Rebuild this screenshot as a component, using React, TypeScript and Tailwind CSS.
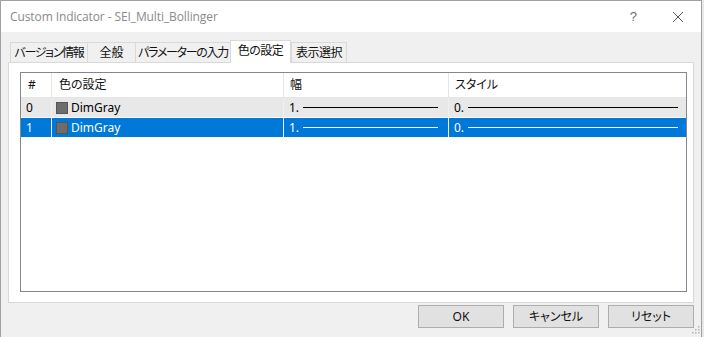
import React from "react";

const tabs = [
  { label: "バージョン情報", w: 78, tr: "tracking-[-1.3px]" },
  { label: "全般", w: 49, tr: "tracking-[0px]" },
  { label: "パラメーターの入力", w: 96, tr: "tracking-[-1.3px]" },
  { label: "色の設定", w: 61, tr: "tracking-[-0.5px]", active: true },
  { label: "表示選択", w: 56, tr: "tracking-[-0.5px]" },
];

function Row({ idx, selected }: { idx: string; selected?: boolean }) {
  const txt = selected ? "text-white" : "text-black";
  const line = selected ? "bg-white" : "bg-black";
  return (
    <div
      className={`flex h-[19px] ${selected ? "bg-[#0078d7]" : "bg-[#e8e8e8]"} ${txt}`}
    >
      <div className="w-[31px] shrink-0 border-r border-[#f0f0f0] pl-[5px] flex items-center">
        {idx}
      </div>
      <div className="w-[232px] shrink-0 border-r border-[#f0f0f0] pl-[4px] flex items-center">
        <span className="w-[12px] h-[12px] bg-[#6d6d6d] border border-[#555555] shrink-0" />
        <span className="ml-[3px]">DimGray</span>
      </div>
      <div className="w-[165px] shrink-0 border-r border-[#f0f0f0] pl-[5px] pr-[10px] flex items-center">
        <span>1.</span>
        <span className={`ml-[4px] flex-1 h-[1px] ${line}`} />
      </div>
      <div className="flex-1 pl-[5px] pr-[8px] flex items-center">
        <span>0.</span>
        <span className={`ml-[4px] flex-1 h-[1px] ${line}`} />
      </div>
    </div>
  );
}

export default function App() {
  return (
    <div className="w-[704px] h-[337px] overflow-hidden bg-[#e8e8e8] font-['Noto_Sans','Noto_Sans_CJK_JP',sans-serif] [font-feature-settings:'palt'] text-[12px] leading-none text-[#111111]">
      <div className="relative w-[702px] h-[337px] flex flex-col border-l border-t border-r border-[#a0a0a0] bg-[#f0f0f0]">
        {/* title bar */}
        <div className="h-[31px] bg-white flex items-center pl-[9px] shrink-0">
          <span className="text-[#8a8a8a] text-[12px] font-['Open_Sans','Noto_Sans',sans-serif] tracking-[-0.1px]">
            Custom Indicator - SEI_Multi_Bollinger
          </span>
          <span className="ml-auto mr-[35px] text-[#6a6a6a] text-[13px] font-['Liberation_Sans',sans-serif]">
            ?
          </span>
          <svg width="12" height="12" viewBox="0 0 12 12" className="mr-[17px]">
            <path d="M1 1 L11 11 M11 1 L1 11" stroke="#555555" strokeWidth="1" />
          </svg>
        </div>

        {/* body */}
        <div className="flex-1 flex flex-col">
          {/* tabs */}
          <div className="flex items-end h-[30px] pl-[9px]">
            {tabs.map((t) =>
              t.active ? (
                <div
                  key={t.label}
                  style={{ width: t.w }}
                  className={`relative z-10 h-[23px] mb-[-1px] bg-white border-t border-l border-r border-[#d9d9d9] flex items-center justify-center pb-[3px] whitespace-nowrap ${t.tr}`}
                >
                  {t.label}
                </div>
              ) : (
                <div
                  key={t.label}
                  style={{ width: t.w }}
                  className={`h-[20px] bg-[#f0f0f0] border-t border-l border-r border-[#d9d9d9] -mr-[1px] flex items-center justify-center whitespace-nowrap ${t.tr}`}
                >
                  {t.label}
                </div>
              )
            )}
          </div>

          {/* panel */}
          <div className="ml-[7px] w-[686px] h-[241px] bg-white border border-[#d9d9d9] pl-[11px] pt-[9px]">
            <div className="w-[667px] h-[220px] border border-[#828790] bg-white flex flex-col">
              <div className="flex h-[25px] border-b border-[#e5e5e5] shrink-0">
                <div className="w-[31px] border-r border-[#e5e5e5] pl-[7px] flex items-center">#</div>
                <div className="w-[232px] border-r border-[#e5e5e5] pl-[7px] flex items-center">色の設定</div>
                <div className="w-[165px] border-r border-[#e5e5e5] pl-[6px] flex items-center">幅</div>
                <div className="flex-1 pl-[6px] flex items-center">スタイル</div>
              </div>
              <Row idx="0" />
              <div className="h-[1px] bg-white" />
              <Row idx="1" selected />
            </div>
          </div>

          {/* buttons */}
          <div className="ml-[7px] w-[686px] mt-[2px] flex justify-end gap-[9px]">
            {["OK", "キャンセル", "リセット"].map((b) => (
              <div
                key={b}
                className="w-[86px] h-[23px] bg-[#e1e1e1] border border-[#adadad] flex items-center justify-center"
              >
                {b}
              </div>
            ))}
          </div>
        </div>

        {/* size grip */}
        <svg width="10" height="10" viewBox="0 0 10 10" className="absolute right-[1px] bottom-[3px]">
          {[
            [8, 2],
            [5, 5],
            [8, 5],
            [2, 8],
            [5, 8],
            [8, 8],
          ].map(([x, y], i) => (
            <rect key={i} x={x} y={y} width="1.5" height="1.5" fill="#b5b5b5" />
          ))}
        </svg>
      </div>
    </div>
  );
}
